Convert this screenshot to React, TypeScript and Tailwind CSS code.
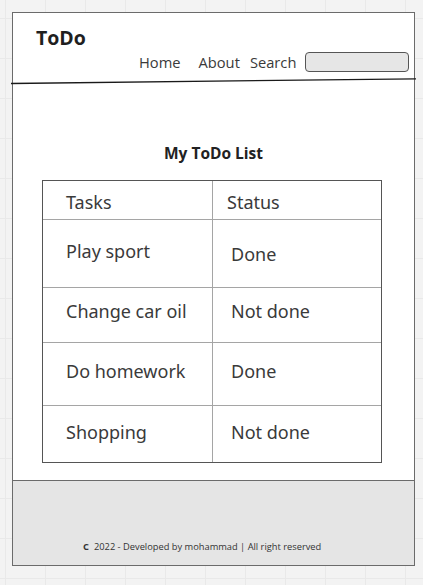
import React from "react";

const rows = [
  { task: "Play sport", status: "Done", h: "h-[68px]", pt: "pt-[19px]", spt: "pt-[22px]" },
  { task: "Change car oil", status: "Not done", h: "h-[55px]", pt: "pt-[11px]", spt: "pt-[11px]" },
  { task: "Do homework", status: "Done", h: "h-[63px]", pt: "pt-[16px]", spt: "pt-[16px]" },
  { task: "Shopping", status: "Not done", h: "h-[56px]", pt: "pt-[14px]", spt: "pt-[14px]" },
];

export default function App() {
  return (
    <div
      className="w-[423px] h-[585px] bg-[#f3f3f3] pt-[12px] pl-[12px] overflow-hidden"
      style={{
        backgroundImage:
          "linear-gradient(to right, #e9e9e9 1px, transparent 1px), linear-gradient(to bottom, #e9e9e9 1px, transparent 1px)",
        backgroundSize: "40px 40px",
        backgroundPosition: "5px 18px",
      }}
    >
      <div
        className="w-[403px] h-[554px] bg-white border border-[#6b6b6b] flex flex-col"
        style={{ fontFamily: '"Open Sans", "Noto Sans", sans-serif' }}
      >
        {/* Header */}
        <div className="relative h-[70px] shrink-0">
          <div className="pl-[23px] pt-[11px] text-[19.5px] leading-[28px] font-bold text-[#1f1f1f]">ToDo</div>
          <div className="absolute left-[126px] top-[39px] flex items-center text-[14.7px] leading-[20px] text-[#3a3a3a]">
            <span>Home</span>
            <span className="ml-[18px]">About</span>
            <span className="ml-[10px]">Search</span>
            <div className="ml-[9px] w-[104px] h-[20px] rounded-[4px] border border-[#555] bg-[#e6e6e6]" />
          </div>
          <svg className="absolute left-[-2px] top-[64px]" width="405" height="8" viewBox="0 0 405 8">
            <line x1="0" y1="6.5" x2="405" y2="1.8" stroke="#1a1a1a" strokeWidth="1.3" />
          </svg>
        </div>

        {/* Main */}
        <div className="flex-1 flex flex-col items-center">
          <div className="mt-[60px] text-[15.5px] leading-[20px] font-bold text-[#222]">My ToDo List</div>
          <div
            className="mt-[17px] ml-[-3px] w-[340px] border border-[#555] text-[#3a3a3a] text-[18px] leading-[24px]"
            style={{ fontFamily: '"Noto Sans", "Open Sans", sans-serif' }}
          >
            <div className="grid grid-cols-[170px_1fr] h-[39px] border-b border-[#a5a5a5]">
              <div className="pl-[23px] pt-[9px] border-r border-[#a5a5a5]">Tasks</div>
              <div className="pl-[14px] pt-[9px]">Status</div>
            </div>
            {rows.map((r, i) => (
              <div
                key={r.task}
                className={`grid grid-cols-[170px_1fr] ${r.h} ${i < rows.length - 1 ? "border-b border-[#a5a5a5]" : ""}`}
              >
                <div className={`pl-[23px] ${r.pt} border-r border-[#a5a5a5]`}>{r.task}</div>
                <div className={`pl-[18px] ${r.spt}`}>{r.status}</div>
              </div>
            ))}
          </div>
        </div>

        {/* Footer */}
        <div className="h-[85px] shrink-0 bg-[#e5e5e5] border-t border-[#6b6b6b] flex items-end pb-[12px] pl-[70px] text-[9.3px] leading-[12px] text-[#333]">
          <span className="font-bold mr-[5px]">C</span>
          <span>2022 - Developed by mohammad | All right reserved</span>
        </div>
      </div>
    </div>
  );
}
